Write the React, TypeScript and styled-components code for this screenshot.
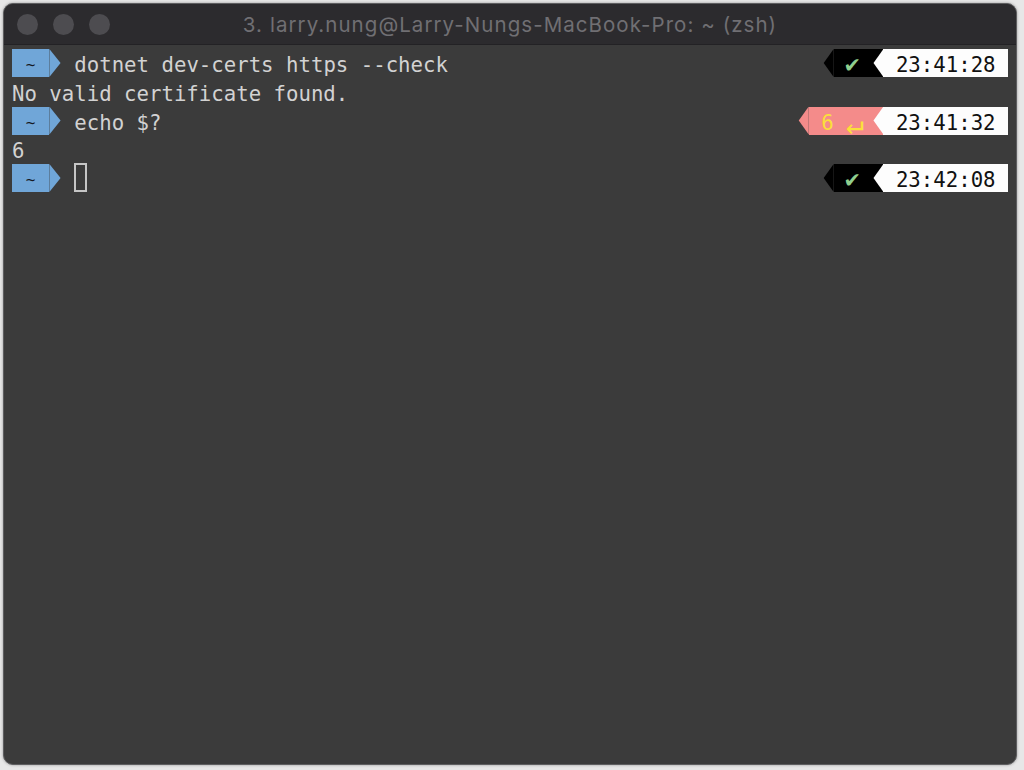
import React from "react";
import styled, { createGlobalStyle } from "styled-components";

const CELL = "12.46px";

const Global = createGlobalStyle`
  html, body { margin: 0; padding: 0; background: #e7e7e7; }
  body { width: 1024px; height: 770px; overflow: hidden; }
  #root { padding: 3px 0 0 3px; }
`;

const Window = styled.div`
  box-sizing: border-box;
  width: 1014px;
  height: 762px;
  border: 1px solid #5e5e60;
  border-radius: 10px;
  overflow: hidden;
  background: #3b3b3b;
  box-shadow: 0 0 3px rgba(0, 0, 0, 0.35);
  display: flex;
  flex-direction: column;
`;

const TitleBar = styled.div`
  height: 40px;
  flex: none;
  background: #2c2b2e;
  border-bottom: 1px solid #232225;
  display: grid;
  grid-template-columns: 1fr auto 1fr;
  align-items: center;
`;

const Lights = styled.div`
  display: flex;
  gap: 15px;
  padding-left: 13px;
`;

const Light = styled.span`
  width: 21px;
  height: 21px;
  border-radius: 50%;
  background: #4d4c50;
`;

const Title = styled.div`
  font-family: Inter, "Liberation Sans", sans-serif;
  font-size: 20.5px;
  color: #706f73;
  white-space: nowrap;
  letter-spacing: 1.05px;
`;

const Body = styled.div`
  flex: 1;
  padding: 4px 8px 0 8px;
  font-family: "DejaVu Sans Mono", "Liberation Mono", monospace;
  font-size: 20.7px;
  color: #d2d2d2;
`;

const Row = styled.div`
  height: 28.75px;
  display: flex;
  justify-content: space-between;
  align-items: flex-start;
  white-space: pre;
`;

const Left = styled.div`
  display: flex;
  align-items: flex-start;
`;

const Text = styled.span`
  line-height: 33px;
  height: 28.75px;
`;

const Command = styled(Text)`
  margin-left: ${CELL};
`;

const DirSeg = styled.span`
  height: 28px;
  width: calc(3 * ${CELL});
  display: flex;
  justify-content: center;
  background: #70a6d8;
`;

const Tilde = styled.span`
  font-size: 16px;
  line-height: 31px;
  color: #151a22;
`;

const DirArrow = styled.span`
  height: 28px;
  width: ${CELL};
  background: #70a6d8;
  clip-path: polygon(0 0, 90% 50%, 0 100%);
`;

const Cursor = styled.span`
  box-sizing: border-box;
  width: ${CELL};
  height: 29px;
  margin-top: -1px;
  margin-left: ${CELL};
  border: 2px solid #c6c6c6;
`;

const Right = styled.div`
  display: flex;
  align-items: flex-start;
`;

const SegArrow = styled.span<{ $bg: string; $prev?: string }>`
  position: relative;
  width: ${CELL};
  height: 28px;
  background: ${(p) => p.$prev ?? "transparent"};
  &::after {
    content: "";
    position: absolute;
    inset: 0;
    background: ${(p) => p.$bg};
    clip-path: polygon(20% 50%, 100% 0, 100% 100%);
  }
`;

const SegBody = styled.span<{ $bg: string; $fg: string }>`
  height: 28px;
  padding: 0 ${CELL};
  background: ${(p) => p.$bg};
  color: ${(p) => p.$fg};
  line-height: 33px;
  display: flex;
`;

const Glyph = styled.span<{ $size?: number; $line?: number; $start?: boolean }>`
  display: flex;
  justify-content: ${(p) => (p.$start ? "flex-start" : "center")};
  width: ${CELL};
  overflow: visible;
  font-size: ${(p) => (p.$size ? `${p.$size}px` : "inherit")};
  line-height: ${(p) => (p.$line ? `${p.$line}px` : "inherit")};
`;

const Gap = styled.span`
  display: inline-block;
  width: ${CELL};
`;

const Seg = styled.div`
  display: flex;
`;

type Status = { code?: string };

const RightPrompt: React.FC<{ time: string } & Status> = ({ time, code }) => {
  const statusBg = code ? "#f48b8a" : "#000000";
  return (
    <Right>
      <Seg>
        <SegArrow $bg={statusBg} />
        {code ? (
          <SegBody $bg={statusBg} $fg="#fbdf3a">
            <Glyph>{code}</Glyph>
            <Gap />
            <Glyph $size={30} $line={33} $start>↵</Glyph>
          </SegBody>
        ) : (
          <SegBody $bg={statusBg} $fg="#90cf8e">
            <Glyph $size={24} $line={30}>✔</Glyph>
          </SegBody>
        )}
      </Seg>
      <Seg>
        <SegArrow $bg="#fdfdfd" $prev={statusBg} />
        <SegBody $bg="#fdfdfd" $fg="#111111">
          {time}
        </SegBody>
      </Seg>
    </Right>
  );
};

const Prompt: React.FC<{ children: React.ReactNode }> = ({ children }) => (
  <Left>
    <DirSeg>
      <Tilde>~</Tilde>
    </DirSeg>
    <DirArrow />
    {children}
  </Left>
);

export default function App() {
  return (
    <>
      <Global />
      <Window>
        <TitleBar>
          <Lights>
            <Light />
            <Light />
            <Light />
          </Lights>
          <Title>3. larry.nung@Larry-Nungs-MacBook-Pro: ~ (zsh)</Title>
          <span />
        </TitleBar>
        <Body>
          <Row>
            <Prompt>
              <Command>dotnet dev-certs https --check</Command>
            </Prompt>
            <RightPrompt time="23:41:28" />
          </Row>
          <Row>
            <Text>No valid certificate found.</Text>
          </Row>
          <Row>
            <Prompt>
              <Command>echo $?</Command>
            </Prompt>
            <RightPrompt time="23:41:32" code="6" />
          </Row>
          <Row>
            <Text>6</Text>
          </Row>
          <Row>
            <Prompt>
              <Cursor />
            </Prompt>
            <RightPrompt time="23:42:08" />
          </Row>
        </Body>
      </Window>
    </>
  );
}
